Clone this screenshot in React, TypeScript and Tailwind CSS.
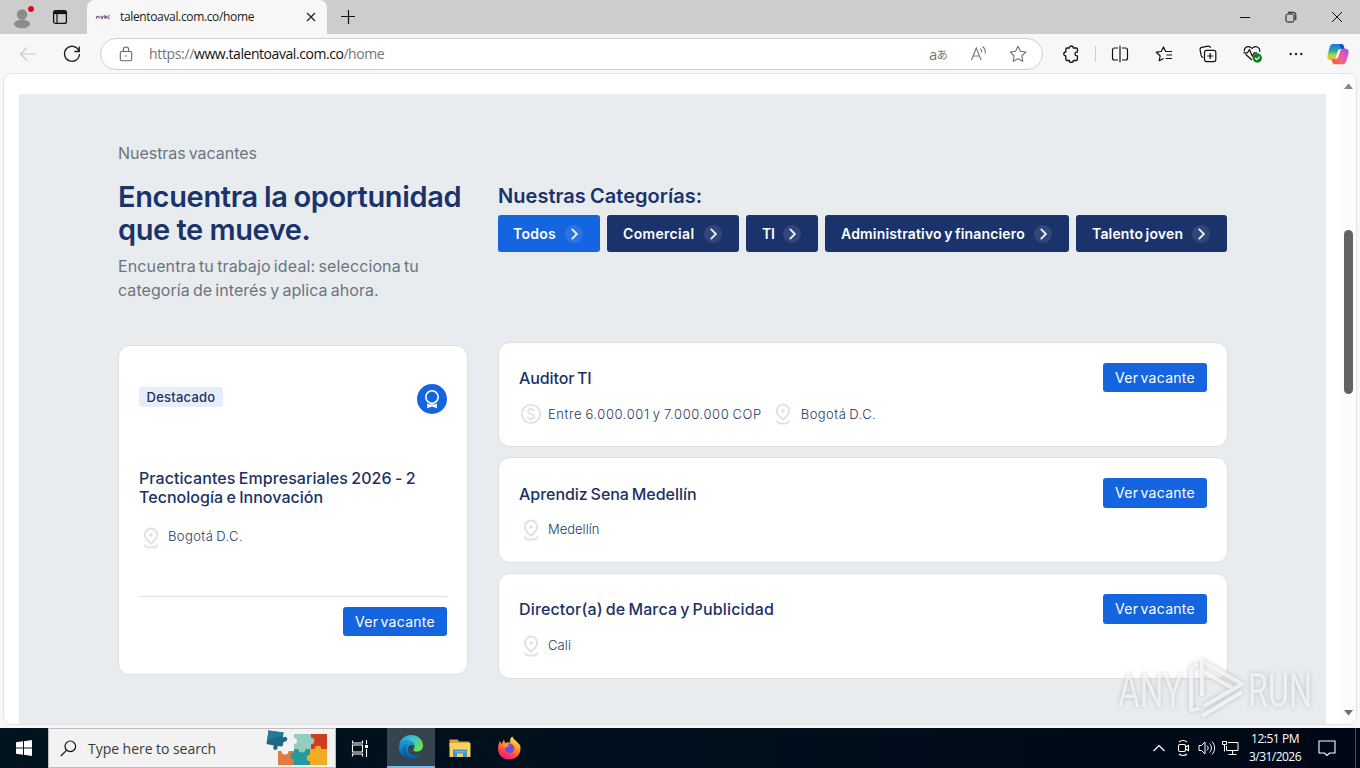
import type { ReactNode } from "react";

const ui = "font-['Open_Sans','Noto_Sans',sans-serif]";

function Chevron() {
  return (
    <span className="flex h-[18px] w-[18px] shrink-0 items-center justify-center rounded-full bg-white/10">
      <svg width="18" height="18" viewBox="0 0 18 18" fill="none" stroke="#e9edf5" strokeWidth="1.9">
        <path d="M6.8 3.8 11.9 9l-5.1 5.2" />
      </svg>
    </span>
  );
}

function Pin() {
  return (
    <svg className="shrink-0" width="24" height="24" viewBox="0 0 24 24" fill="none" stroke="#e2e2e2" strokeWidth="2">
      <path d="M12 17.8c-2.6-2.2-6.2-5.1-6.200-9a6.200 6.200 0 0 1 12.400 0c0 3.900-3.600 6.800-6.200 9Z" />
      <circle cx="12" cy="9" r="1.300" fill="#e2e2e2" strokeWidth="1" />
      <path d="M5.800 18.400c0 4.200 12.400 4.200 12.400 0" />
    </svg>
  );
}

function Coin() {
  return (
    <svg className="shrink-0" width="24" height="24" viewBox="0 0 24 24" fill="none" stroke="#e2e2e2" strokeWidth="1.8">
      <circle cx="12" cy="12" r="9.200" />
      <path d="M15 9.200c-.3-1.300-1.400-2-3-2-1.700 0-3 .8-3 2.300 0 3.300 6.200 1.500 6.200 5 0 1.500-1.400 2.400-3.200 2.400-1.800 0-3.100-.9-3.300-2.300M12 5.500v1.700M12 16.900v1.700" />
    </svg>
  );
}

function ApplyButton({ size }: { size: string }) {
  return (
    <button className={`flex w-[104px] shrink-0 items-center justify-center rounded-[3px] bg-[#1565e0] text-[14px] leading-5 font-normal tracking-[0.3px] whitespace-nowrap text-white [word-spacing:-2px] ${size}`}>
      Ver vacante
    </button>
  );
}

type JobProps = { title: string; tracking: string; size: string; body: string; button: string; children: ReactNode };

function Job({ title, tracking, size, body, button, children }: JobProps) {
  return (
    <article className={`flex items-start justify-between rounded-[12px] border border-[#dedfe3] bg-white px-[20px] ${size}`}>
      <div className={`flex flex-col ${body}`}>
        <h3 className={`text-[16px] leading-[30px] font-medium whitespace-nowrap text-[#1b3264] ${tracking}`}>{title}</h3>
        <div className="flex h-6 items-center text-[13px] font-light whitespace-nowrap text-[#1f3763]">{children}</div>
      </div>
      <div className="flex pt-[20px]"><ApplyButton size={button} /></div>
    </article>
  );
}

const categories = [
  { label: "Todos", size: "w-[102px] bg-[#1565e0] pl-[15px]", tracking: "tracking-[0.27px]" },
  { label: "Comercial", size: "w-[132px] bg-[#1a336b] pl-[16px]", tracking: "tracking-[0.33px]" },
  { label: "TI", size: "w-[72px] bg-[#1a336b] pl-[16px]", tracking: "tracking-[-0.3px]" },
  { label: "Administrativo y financiero", size: "w-[244px] bg-[#1a336b] pl-[16px]", tracking: "tracking-[0.17px] [word-spacing:-1.3px]" },
  { label: "Talento joven", size: "w-[151px] bg-[#1a336b] pl-[16px]", tracking: "tracking-[0.16px] [word-spacing:-1.3px]" },
];

function TabStrip() {
  return (
    <div className="flex h-[34px] shrink-0 bg-[#cdcdcd]">
      <div className="flex w-[87px] items-center pl-[11px]">
        <svg width="24" height="28" viewBox="0 0 24 28">
          <circle cx="11" cy="11.500" r="5.200" fill="#8f8b88" />
          <ellipse cx="11" cy="21" rx="8" ry="4.200" fill="#8f8b88" />
          <circle cx="20" cy="6" r="4" fill="#e6c9cb" />
          <circle cx="20" cy="6" r="3" fill="#d70f22" />
        </svg>
        <svg className="ml-[17px]" width="16" height="16" viewBox="0 0 16 16" fill="none" stroke="#111">
          <rect x="1.600" y="1.600" width="12.800" height="12.800" rx="2" strokeWidth="1.300" />
          <path d="M1.600 3.600h12.800" strokeWidth="3" />
          <path d="M5 4v10" strokeWidth="1.200" />
        </svg>
      </div>
      <div className="flex h-[34px] w-[240px] items-center rounded-t-[8px] bg-[#f7f7f7] pr-[10px] pl-[8px]">
        <svg width="16" height="16" viewBox="0 0 16 16" fill="none" strokeWidth="1.100">
          <path d="M1.300 9.800c0-3.200 3-3.200 3 0M5.500 6.800l1.500 2.800 1.500-2.800" stroke="#77507a" />
          <path d="M9.800 9.800V7l1.400 1.700V6.800" stroke="#3f62a8" />
          <path d="M14.800 6.900c-2.600-.6-2.800 2.600 0 2.500" stroke="#b95570" />
        </svg>
        <span className="ml-[9px] flex-1 text-[12px] leading-4 tracking-[-0.350px] whitespace-nowrap text-[#1a1a1a]">talentoaval.com.co/home</span>
        <svg width="12" height="12" viewBox="0 0 12 12" stroke="#222" strokeWidth="1.200"><path d="m2 2 8 8M10 2l-8 8" /></svg>
      </div>
      <div className="flex w-[42px] items-center justify-center">
        <svg width="16" height="16" viewBox="0 0 16 16" stroke="#111" strokeWidth="1.200"><path d="M8.500 1v14M1 7.500h14" /></svg>
      </div>
      <div className="flex flex-1 items-center justify-end gap-[34px] pr-[17px]">
        <svg width="12" height="12" viewBox="0 0 12 12" stroke="#111"><path d="M1 6.500h10" /></svg>
        <svg width="12" height="12" viewBox="0 0 12 12" fill="none" stroke="#111"><rect x="1" y="3" width="8" height="8" rx="1.500" /><path d="M3 1.300h5.500A2.300 2.300 0 0 1 10.800 3.600V9" /></svg>
        <svg width="12" height="12" viewBox="0 0 12 12" stroke="#111"><path d="m1 1 10 10M11 1 1 11" /></svg>
      </div>
    </div>
  );
}

function Toolbar() {
  return (
    <div className="flex h-[39px] shrink-0 items-center bg-[#f7f7f7] pl-[19px] pr-[10px]">
      <svg width="18" height="18" viewBox="0 0 18 18" fill="none" stroke="#c9c9c9" strokeWidth="1.200"><path d="M16.500 9H1.800M8 2.500 1.500 9 8 15.500" /></svg>
      <svg className="ml-[26px]" width="18" height="18" viewBox="0 0 18 18" fill="none" stroke="#1f1f1f" strokeWidth="1.300"><path d="M15.800 5.600A7.500 7.500 0 1 0 16.500 9M16.300 1.500v5h-5" /></svg>
      <div className="ml-[19px] flex h-8 w-[943px] items-center rounded-full border border-[#d0d0d0] bg-white pl-[18px] pr-[15px]">
        <svg width="14" height="16" viewBox="0 0 14 16" fill="none" stroke="#666" strokeWidth="1.100">
          <rect x="1.300" y="5.500" width="11.400" height="9.300" rx="1.500" />
          <path d="M4.300 5.500V3.700a2.700 2.700 0 0 1 5.400 0v1.800" />
          <circle cx="7" cy="10" r=".8" fill="#666" stroke="none" />
        </svg>
        <p className="ml-[16px] flex flex-1 text-[14px] leading-5 whitespace-nowrap text-[#767676]">
          <span className="tracking-[-0.34px]">https://</span>
          <span className="tracking-[-0.440px] text-[#111]">www.talentoaval.com.co</span>
          <span className="tracking-[-0.45px]">/home</span>
        </p>
        <span className="flex w-[18px] items-center text-[15px] leading-5 tracking-[-0.5px] text-[#747474]">
          a<span className="font-['Noto_Sans_CJK_JP',sans-serif] text-[11px] leading-4">あ</span>
        </span>
        <svg className="ml-[23px]" width="18" height="18" viewBox="0 0 18 18" fill="none" stroke="#777" strokeWidth="1.100">
          <path d="m1.500 15 4.800-12 4.800 12M3.300 11h6" />
          <path d="M10.200 3.700c1.200.8 1.700 2.200 1.500 3.800M12.500 1.500c2.300 1.600 3.100 4.200 2.700 7" />
        </svg>
        <svg className="ml-[21px]" width="18" height="18" viewBox="0 0 18 18" fill="none" stroke="#6f6f6f" strokeWidth="1.100" strokeLinejoin="round">
          <path d="m9 1.300 2.400 4.900 5.400.8-3.900 3.800.9 5.400L9 13.700l-4.800 2.500.9-5.400L1.200 7l5.400-.8Z" />
        </svg>
      </div>
      <svg className="ml-[19px]" width="18" height="18" viewBox="0 0 18 18" fill="none" stroke="#111" strokeWidth="1.300" strokeLinejoin="round">
        <path d="M7.300 3a2 2 0 0 1 4 0h2.900c.7 0 1.200.5 1.200 1.200v3h-.6a1.800 1.800 0 0 0 0 3.600h.6v3.500c0 .7-.5 1.200-1.200 1.200h-2.900a2 2 0 0 1-4 0H5c-.7 0-1.200-.5-1.200-1.200V11a2 2 0 0 1 0-4V4.200C3.800 3.500 4.300 3 5 3Z" />
      </svg>
      <span className="ml-[15px] h-4 w-px bg-[#cfcfcf]" />
      <svg className="ml-[15px]" width="18" height="18" viewBox="0 0 18 18" fill="none" stroke="#111" strokeWidth="1.200">
        <path d="M7 3H3.500C2.300 3 1.500 3.800 1.500 5v8c0 1.200.8 2 2 2H7M11 3h3.500c1.200 0 2 .8 2 2v8c0 1.200-.8 2-2 2H11M9 .8v16.400" />
      </svg>
      <svg className="ml-[26px]" width="18" height="18" viewBox="0 0 18 18" fill="none" stroke="#111" strokeWidth="1.200" strokeLinejoin="round">
        <path d="M8.500 13.500 4.300 15.700l.8-4.900L1.300 7.200l5-.7L8.500 2l2.200 4.500H17M11.500 10H17M10.500 13.500H17" />
      </svg>
      <svg className="ml-[26px]" width="18" height="18" viewBox="0 0 18 18" fill="none" stroke="#111" strokeWidth="1.200">
        <path d="M4.500 12.500c-1.500 0-2-.7-2.300-1.800L1.100 5c-.3-1.400.4-2.300 1.700-2.600L9 1.200c1.300-.2 2.200.4 2.500 1.600" />
        <rect x="5.500" y="5.300" width="11.300" height="11.300" rx="2" />
        <path d="M11.200 8v6M8.200 11h6" />
      </svg>
      <svg className="ml-[26px]" width="20" height="18" viewBox="0 0 20 18" fill="none" stroke="#111" strokeWidth="1.200" strokeLinejoin="round">
        <path d="M9 15 2.500 9.300M1.300 6.500C.8 2 5.500-.2 9 3.300c3.500-3.500 8.500-1 7.700 3.500M.5 7.800h4l2-3.200 2.800 6.600 2-3.400h2.700" />
        <circle cx="14.300" cy="13" r="4.700" fill="#13801f" stroke="none" />
        <path d="m12.100 13 1.600 1.600 2.900-3" stroke="#fff" />
      </svg>
      <svg className="ml-[25px]" width="16" height="16" viewBox="0 0 16 16" fill="#222"><circle cx="2.700" cy="8" r="1.200" /><circle cx="8" cy="8" r="1.200" /><circle cx="13.300" cy="8" r="1.200" /></svg>
      <svg className="ml-[22px] shrink-0" width="24" height="22" viewBox="0 0 24 22">
        <defs>
          <linearGradient id="cpA" x1="0" y1="0" x2="0" y2="1"><stop stopColor="#147be0" /><stop offset=".45" stopColor="#2aa9a8" /><stop offset=".7" stopColor="#b9d43c" /><stop offset="1" stopColor="#f5b623" /></linearGradient>
          <linearGradient id="cpB" x1="1" y1="0" x2="0" y2="1"><stop stopColor="#b04be8" /><stop offset=".5" stopColor="#ee5f9f" /><stop offset="1" stopColor="#f9652b" /></linearGradient>
        </defs>
        <path d="M7 1h8c2 0 2.500 1 3 3l.6 2H15c-2 0-3 1-3.600 3l-1.600 5.500C9.300 16 8.600 17 7 17H4.500C2 17 .8 15.500 1.500 12.500l2-8C4.200 2.200 5.200 1 7 1Z" fill="url(#cpA)" />
        <path d="M13 1h2c2 0 2.500 1 3 3l.6 2H15.500C14.300 6 14 3 13 1Z" fill="#1a4fc3" />
        <path d="M17 21.200H9c-2 0-2.500-1-3-3L5.400 16H9c2 0 3-1 3.600-3l1.600-5c.5-1.500 1.200-2.300 2.800-2.300h2.500c2.500 0 3.700 1.500 3 4.500l-2 7.500c-.7 2.300-1.700 3.500-3.500 3.500Z" fill="url(#cpB)" />
        <path d="m12.500 8-2 6.500c1.200-.3 1.600-1 1.900-2l1.400-4.500Z" fill="#fff" />
      </svg>
    </div>
  );
}

function Vacancies() {
  return (
    <section className="flex h-[630px] w-[1307px] flex-col bg-[#e9ecef] pl-[99px] pr-[98px] font-['Inter',sans-serif]">
      <div className="flex h-[248px] gap-[30px]">
        <div className="w-[350px] shrink-0 pt-[47px] text-[16px] leading-6 whitespace-nowrap text-[#6c757d]">
          <p className="tracking-[-0.03px] [word-spacing:-1.5px]">Nuestras vacantes</p>
          <h1 className="mt-[15px] text-[29px] leading-[33px] font-semibold text-[#1a336b]">
            <span className="block tracking-[-0.340px] [word-spacing:-1px]">Encuentra la oportunidad</span>
            <span className="block tracking-[-0.45px]">que te mueve.</span>
          </h1>
          <p className="mt-[8px]">
            <span className="block tracking-[0.12px] [word-spacing:-1.400px]">Encuentra tu trabajo ideal: selecciona tu</span>
            <span className="block tracking-[0.060px] [word-spacing:-1.400px]">categoría de interés y aplica ahora.</span>
          </p>
        </div>
        <div className="pt-[88px]">
          <h2 className="text-[20px] leading-[28px] font-semibold tracking-[0.04px] whitespace-nowrap text-[#1a336b] [word-spacing:-1px]">Nuestras Categorías:</h2>
          <div className="mt-[5px] flex gap-[7px]">
            {categories.map((c) => (
              <button key={c.label} className={`flex h-[37px] items-center justify-between rounded-[3px] pr-[17px] text-[14px] leading-5 font-semibold whitespace-nowrap text-white ${c.size} ${c.tracking}`}>
                {c.label}
                <Chevron />
              </button>
            ))}
          </div>
        </div>
      </div>
      <div className="flex items-start gap-[30px]">
        <article className="mt-[3px] flex h-[330px] w-[350px] shrink-0 flex-col rounded-[12px] border border-[#dedfe3] bg-white px-[20px] pt-[38px]">
          <div className="flex h-[30px] items-start justify-between">
            <span className="mt-[3px] flex h-5 w-[84px] items-center justify-center rounded-[3px] bg-[#e7eefa] text-[13px] leading-4 font-medium tracking-[0.220px] text-[#1b3264]">Destacado</span>
            <span className="flex h-[30px] w-[30px] items-center justify-center rounded-full bg-[#1565e0]">
              <svg width="20" height="20" viewBox="0 0 20 20" fill="none" stroke="#fff" strokeWidth="1.600">
                <circle cx="10" cy="8" r="6.200" />
                <path d="M5.200 14.300 7 15.200h6l1.800-.9v4.900L10 17.600l-4.800 1.600Z" fill="#fff" stroke="none" />
              </svg>
            </span>
          </div>
          <h3 className="mt-[55px] text-[16px] leading-[19px] font-medium whitespace-nowrap text-[#1b3264]">
            <span className="block tracking-[0.070px] [word-spacing:-1px]">Practicantes Empresariales 2026 - 2</span>
            <span className="block tracking-[0.03px] [word-spacing:-1px]">Tecnología e Innovación</span>
          </h3>
          <div className="mt-[19px] flex h-6 items-center text-[13px] font-light text-[#1f3763]">
            <Pin />
            <span className="ml-[5px] pb-[2px] tracking-[0.4px] [word-spacing:-1px]">Bogotá D.C.</span>
          </div>
          <div className="mt-[46px] flex justify-end border-t border-[#d9e2ea] pt-[10px]"><ApplyButton size="h-[29px]" /></div>
        </article>
        <div className="flex w-[730px] flex-col">
          <Job title="Auditor TI" size="h-[105px]" body="pt-[20px] gap-[9px]" button="h-[29px]" tracking="tracking-[-0.1px] [word-spacing:-1.5px]">
            <Coin />
            <span className="ml-[5px] pt-px tracking-[0.580px] [word-spacing:-1px]">Entre 6.000.001 y 7.000.000 COP</span>
            <span className="ml-[9px]"><Pin /></span>
            <span className="ml-[6px] pt-px tracking-[0.45px] [word-spacing:-1px]">Bogotá D.C.</span>
          </Job>
          <div className="mt-[10px] flex flex-col gap-[10px]">
            <Job title="Aprendiz Sena Medellín" size="h-[106px]" body="pt-[21px] gap-[9px]" button="h-[30px]" tracking="tracking-[-0.03px] [word-spacing:-1.4px]">
              <Pin />
              <span className="ml-[5px]">Medellín</span>
            </Job>
            <Job title="Director(a) de Marca y Publicidad" size="h-[106px]" body="pt-[20px] gap-[10px]" button="h-[30px]" tracking="tracking-[0.15px] [word-spacing:-1.4px]">
              <Pin />
              <span className="ml-[5px] tracking-[0.1px]">Cali</span>
            </Job>
          </div>
        </div>
      </div>
    </section>
  );
}

function Watermark() {
  return (
    <svg className="absolute top-[640px] left-[1100px] drop-shadow-[0_0_2px_rgba(90,95,105,0.5)]" width="260" height="100" viewBox="-10 -10 260 100" fill="#fff" fillOpacity=".65">
      <text x="8" y="56.500" fontFamily="Roboto, sans-serif" fontWeight="400" fontSize="49" textLength="65" lengthAdjust="spacingAndGlyphs">ANY</text>
      <text x="138" y="56.500" fontFamily="Roboto, sans-serif" fontWeight="400" fontSize="49" textLength="64" lengthAdjust="spacingAndGlyphs">RUN</text>
      <g fill="none" stroke="#fff" strokeOpacity=".7" strokeWidth="4" strokeLinejoin="round">
        <path d="M92 46V11l40 23-38 22 M92 11v10l32 18" />
        <path d="M81 61V18l7-4M81 61l8-3M92 66l40-24" />
      </g>
    </svg>
  );
}

function Taskbar() {
  return (
    <footer className="flex h-10 shrink-0 items-stretch bg-gradient-to-r from-[#00141f] via-[#000f1d] to-[#000817]">
      <div className="flex w-12 items-center justify-center">
        <svg width="16" height="16" viewBox="0 0 16 16" fill="#fff"><path d="M0 2.300 7 1.300v6.200H0ZM8 1.200 16 0v7.500H8ZM0 8.500h7v6.200l-7-1ZM8 8.500h8V16l-8-1.200Z" /></svg>
      </div>
      <div className="flex w-[288px] items-center border border-[#bcbcbc] bg-[#f2f2f2] pl-[11px]">
        <svg width="17" height="17" viewBox="0 0 17 17" fill="none" stroke="#111" strokeWidth="1.200"><circle cx="10.300" cy="6.300" r="5.300" /><path d="M6.500 10.300.8 16" /></svg>
        <span className="ml-[11px] flex-1 pt-px text-[14px] leading-5 tracking-[-0.04px] whitespace-nowrap text-[#3a3a3a]">Type here to search</span>
        <svg className="mr-[4px]" width="66" height="38" viewBox="0 0 66 38">
          <path d="M13 22h16v14H13Z" fill="#e07a3e" />
          <path d="M29 5h17v15H29Z" fill="#94cdbd" />
          <path d="M46 5h16v16H46Z" fill="#cf3d1e" />
          <path d="M29 20h16v16H29Z" fill="#2599a0" />
          <path d="M45 20h17v16H45Z" fill="#f0ac25" />
          <circle cx="29" cy="27" r="3.500" fill="#2599a0" /><circle cx="37" cy="20" r="3.500" fill="#94cdbd" /><circle cx="46" cy="12" r="3.300" fill="#94cdbd" /><circle cx="45" cy="29" r="3.300" fill="#f0ac25" /><circle cx="53" cy="20" r="3.300" fill="#f0ac25" /><circle cx="29" cy="12" r="3" fill="#f2f2f2" /><circle cx="20" cy="22" r="3.500" fill="#f2f2f2" />
          <path d="m3.500 1.500 15 2-.7 5c4.500-3 7 4 .7 4.500l-1 4.500-5-.5c1 5.500-6.500 5-3.500-.5L1.500 15Z" fill="#1c6886" />
          <path d="m3.500 1.500 15 2-.5 3-15.500 4Z" fill="#267998" />
        </svg>
      </div>
      <div className="flex w-[51px] items-center justify-center pr-[3px]">
        <svg width="18" height="17" viewBox="0 0 18 17" fill="none" stroke="#fff" strokeWidth="1.100"><path d="M1.500.5V3h10V.5M1.500 16.500V14h10v2.500M1.500 5h10v7h-10ZM15.500 0v4M15.500 9v8" /><path d="M14 5h3v3h-3Z" fill="#fff" stroke="none" /></svg>
      </div>
      <div className="flex w-12 items-center justify-center border-b-2 border-[#76b9ed] bg-[#34454e]">
        <svg width="26" height="26" viewBox="0 0 26 26">
          <defs><linearGradient id="edA" x1="0" y1="0" x2="1" y2=".6"><stop stopColor="#279ad9" /><stop offset=".5" stopColor="#35c1d2" /><stop offset="1" stopColor="#6bdf56" /></linearGradient><linearGradient id="edB" x1="0" y1="0" x2="0" y2="1"><stop stopColor="#1aa0e4" /><stop offset="1" stopColor="#0c59a4" /></linearGradient></defs>
          <path d="M1 12C2 5 7 1 13 1c7 0 12 5 12 10.500 0 4-3 6-6.500 6-3 0-3.500-1.300-3-2.300 1-1.200 1-2.200 1-3C16.500 9 13 6.500 9 6.500c-4 0-7 2-8 5.500Z" fill="url(#edA)" />
          <path d="M1 12.500C2 9 5 6.500 9 6.500c4 0 7 2.500 7.500 5.500-1-1.500-6-2-6.500 2.500-.5 4 4 9.500 12.500 6C20 23.700 16.700 25 13 25 6 25 .4 19.500 1 12.500Z" fill="url(#edB)" />
          <path d="M9 10c-3 5-1 11.500 5 14.800-2 .5-5 .1-7-1.300C3 19 4 12.500 9 10Z" fill="#10488b" opacity=".5" />
        </svg>
      </div>
      <div className="flex w-[49px] items-center justify-center">
        <svg width="24" height="22" viewBox="0 0 24 22"><path d="M1.500 2.500h8L11 4.500h10.500v5h-20Z" fill="#dba13a" /><path d="M1.500 6h21v14h-21Z" fill="#fbd15b" /><path d="M5 20v-7.500h14V20h-4v-3.500H9V20Z" fill="#3a93d3" /><path d="M6.500 14h11v1.500h-11Z" fill="#68b6e8" /></svg>
      </div>
      <div className="flex w-[49px] items-center justify-center">
        <svg width="24" height="24" viewBox="0 0 24 24">
          <defs><linearGradient id="ffA" x1=".8" y1="0" x2=".3" y2="1"><stop stopColor="#fff04a" /><stop offset=".4" stopColor="#ff9a24" /><stop offset=".75" stopColor="#ff3b50" /><stop offset="1" stopColor="#e81a83" /></linearGradient></defs>
          <path d="M3 5 4.500 8 7 3.500 8 7c2-.8 4-.8 5.500-.3C12.500 4 13.300 2 15.500.5c.2 3 5.500 4.800 6.800 8.500l.5-1C25.500 17 20 23.500 12 23.500 5.500 23.500 1 19 1 12.500 1 9.500 2 7 3 5Z" fill="url(#ffA)" />
          <circle cx="12.500" cy="12.300" r="4.800" fill="#7847db" />
          <path d="M6 8.500c2-1.300 4.500-1 6.500 1.200-2 0-2.500 1.500-4 2-1.800.5-2.700-1-2.500-3.200Z" fill="#ff9b25" />
        </svg>
      </div>
      <div className="flex flex-1 items-center justify-end text-white">
        <svg width="14" height="14" viewBox="0 0 14 14" fill="none" stroke="#fff" strokeWidth="1.200"><path d="m1.500 10 5.500-5.500 5.500 5.500" /></svg>
        <svg className="ml-[10px]" width="14" height="18" viewBox="0 0 14 18" fill="none" stroke="#fff" strokeWidth="1.100"><rect x="2.500" y="5.500" width="7" height="7" rx="1.500" /><path d="m9.500 8 3-1.500v5l-3-1.500M3 3c2-2 6-2 8 0M3 15c2 2 6 2 8 0" /></svg>
        <svg className="ml-[8px]" width="18" height="16" viewBox="0 0 18 16" fill="none" stroke="#fff"><path d="M1 5.500h2.500L7 2v12l-3.500-3.500H1ZM9 5.500c1.500 1.500 1.500 3.500 0 5M11.500 3.500c2.500 2.700 2.500 6.300 0 9M14 1.500c3.500 3.800 3.500 9.200 0 13" /></svg>
        <svg className="ml-[6px]" width="17" height="16" viewBox="0 0 17 16" fill="none" stroke="#fff"><path d="M6 2.500h10v8H4.500V6M10.500 10.500v4M6.500 14.500h8M.5 1.500h4v3h-4ZM2.500 4.500v7" /></svg>
        <div className="ml-[9px] flex w-[54px] flex-col items-center text-[12px] leading-[18px] whitespace-nowrap">
          <span className="tracking-[-0.466px]">12:51 PM</span>
          <span className="tracking-[-0.53px]">3/31/2026</span>
        </div>
        <svg className="ml-[16px]" width="18" height="17" viewBox="0 0 18 17" fill="none" stroke="#fff" strokeWidth="1.100"><path d="M1 1h16v12h-5.500L9 15.500 6.500 13H1Z" /></svg>
        <span className="ml-[19px] h-10 w-px bg-[#46505b]" />
        <span className="w-[4px]" />
      </div>
    </footer>
  );
}

export default function App() {
  return (
    <div className={`relative flex h-[768px] w-[1360px] flex-col overflow-hidden bg-[#f7f7f7] ${ui}`}>
      <TabStrip />
      <Toolbar />
      <main className="mx-[3px] mb-[3px] flex h-[652px] shrink-0 overflow-hidden rounded-[9px] border border-[#e3e3e3] bg-white">
        <div className="w-[1337px] shrink-0 pt-[20px] pl-[15px]"><Vacancies /></div>
        <div className="flex flex-1 flex-col items-center bg-[#fcfcfc] pt-[9px] pb-[8px]">
          <svg width="9" height="6" viewBox="0 0 9 6" fill="#858585"><path d="M0 6 4.500.5 9 6Z" /></svg>
          <span className="mt-[141px] h-[164px] w-[9px] rounded-full bg-[#636363]" />
          <svg className="mt-auto" width="9" height="6" viewBox="0 0 9 6" fill="#707070"><path d="m0 0 4.500 5.500L9 0Z" /></svg>
        </div>
      </main>
      <Taskbar />
      <Watermark />
    </div>
  );
}
